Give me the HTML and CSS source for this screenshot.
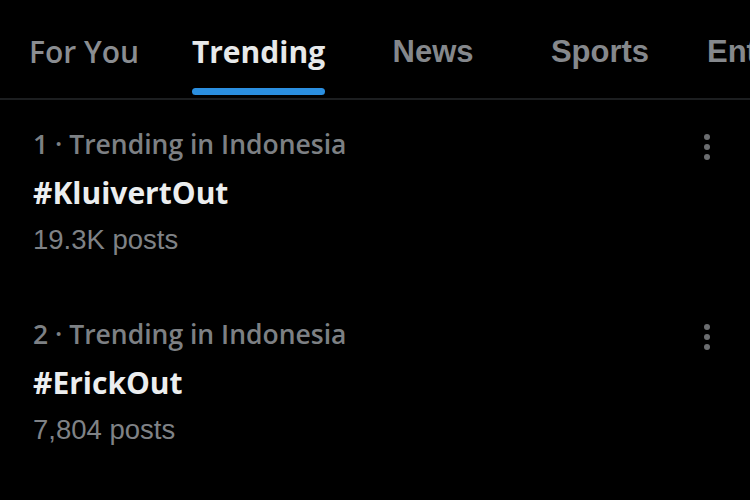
FILE: index.html
```html
<!DOCTYPE html>
<html>
<head>
<meta charset="utf-8">
<link rel="stylesheet" href="styles.css">
</head>
<body>
<div class="page">
  <nav class="tabs">
    <div class="tab"><span class="label">For You</span></div>
    <div class="tab active"><span class="label">Trending</span><span class="bar"></span></div>
    <div class="tab arial news"><span class="label">News</span></div>
    <div class="tab arial"><span class="label">Sports</span></div>
    <div class="tab arial last"><span class="label">Entertainment</span></div>
  </nav>
  <section class="list">
    <article class="trend">
      <div class="body">
        <div class="meta">1 · Trending in Indonesia</div>
        <div class="tag">#KluivertOut</div>
        <div class="count">19.3K posts</div>
      </div>
      <svg class="more" width="8" height="28" viewBox="0 0 8 28"><circle cx="4" cy="4" r="3" fill="#6b6d70"/><circle cx="4" cy="14" r="3" fill="#6b6d70"/><circle cx="4" cy="24" r="3" fill="#6b6d70"/></svg>
    </article>
    <article class="trend">
      <div class="body">
        <div class="meta">2 · Trending in Indonesia</div>
        <div class="tag">#ErickOut</div>
        <div class="count">7,804 posts</div>
      </div>
      <svg class="more" width="8" height="28" viewBox="0 0 8 28"><circle cx="4" cy="4" r="3" fill="#6b6d70"/><circle cx="4" cy="14" r="3" fill="#6b6d70"/><circle cx="4" cy="24" r="3" fill="#6b6d70"/></svg>
    </article>
  </section>
</div>
</body>
</html>
```

FILE: styles.css
```css
html, body {
  margin: 0;
  padding: 0;
  background: #000;
}
.page {
  width: 750px;
  height: 500px;
  overflow: hidden;
  background: #000;
  font-family: "Open Sans", "Liberation Sans", sans-serif;
}
.tabs {
  display: flex;
  height: 98px;
  border-bottom: 2px solid #1c1e20;
  margin-left: -2px;
  white-space: nowrap;
}
.tab {
  flex: 0 0 172px;
  display: flex;
  flex-direction: column;
  align-items: center;
  padding-top: 30px;
  box-sizing: border-box;
}
.tab .label {
  font-size: 30px;
  line-height: 44px;
  font-weight: 600;
  color: #8a8d91;
}
.tab.arial .label {
  font-family: "Liberation Sans", sans-serif;
  font-weight: 700;
  font-size: 31px;
  color: #85888c;
}
.tab.active {
  padding-left: 5px;
}
.tab.news {
  padding-left: 10px;
}
.tab.active .label {
  font-weight: 700;
  color: #e7e9ea;
}
.tab .bar {
  margin-top: 14px;
  height: 7px;
  border-radius: 4px;
  background: #2b8fe0;
  width: 133px;
}
.tab.last {
  align-items: flex-start;
  padding-left: 21px;
}
.list {
  display: flex;
  flex-direction: column;
}
.trend {
  display: flex;
  justify-content: space-between;
  height: 190px;
  padding: 29px 39px 0 33px;
  box-sizing: border-box;
}
.meta {
  font-size: 26.5px;
  line-height: 30px;
  font-weight: 600;
  color: #7d8084;
}
.tag {
  margin-top: 17px;
  font-size: 30px;
  line-height: 34px;
  font-weight: 700;
  color: #eceeef;
}
.count {
  margin-top: 14px;
  font-family: "Liberation Sans", sans-serif;
  font-size: 27.5px;
  line-height: 32px;
  color: #7f8286;
}
.more {
  margin-top: 4px;
}
```
